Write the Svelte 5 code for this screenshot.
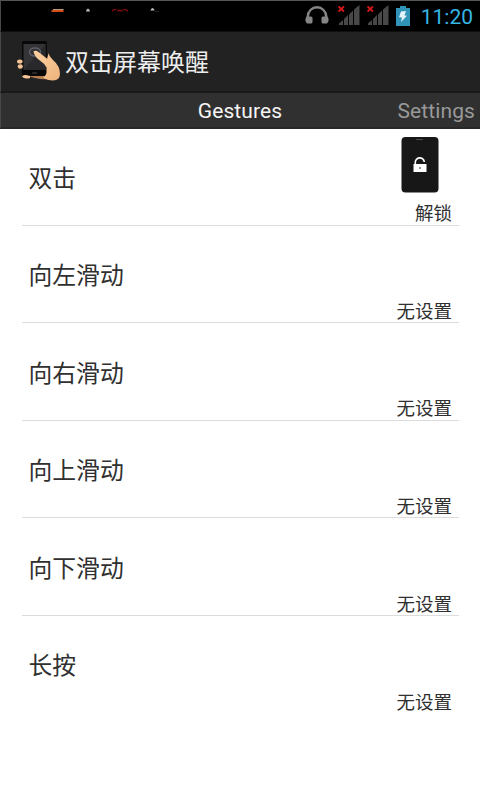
<script>
  const rows = [
    { name: '双击', action: '解锁', locked: true },
    { name: '向左滑动', action: '无设置' },
    { name: '向右滑动', action: '无设置' },
    { name: '向上滑动', action: '无设置' },
    { name: '向下滑动', action: '无设置' },
    { name: '长按', action: '无设置' }
  ];
</script>

{#snippet signal()}
  <svg class="signal" width="23" height="21" viewBox="0 0 23 21">
    <g fill="#484848">
      <path d="M1 20v-1.500l4-3.500v5z" />
      <path d="M6 20v-6l4-4v10z" />
      <path d="M11 20v-10.500l4-4v14.500z" />
      <path d="M16 20v-15.500l5.500-4.500v20z" />
    </g>
    <path d="M.5 1.500l5.500 5M6 1.500l-5.500 5" stroke="#d51919" stroke-width="1.900" />
  </svg>
{/snippet}

<div class="screen">
  <header class="status">
    <svg class="notices" width="165" height="20" viewBox="0 0 165 20">
      <path d="M53 9.500h10.500" stroke="#bd9a84" />
      <path d="M51.500 11h12" stroke="#d44d16" stroke-width="2" />
      <path d="M86 11.500q0-2 2-3q2 1 2 3zM150.500 10.500q0-2 2-2.500q2 .5 2 2.500z" fill="#bbb" />
      <path d="M112 11q1-1.500 4-1.500M117 10.500h6M123.500 9.500q3.500 0 4.500 1.500" fill="none" stroke="#810b0b" stroke-width="1.500" />
      <path d="M155 11.500h4" stroke="#222" />
    </svg>
    <div class="indicators">
      <svg class="headphones" width="24" height="19" viewBox="0 0 24 19">
        <path d="M2.800 12v-1.500a9.200 9.200 0 0 1 18.400 0v1.500" fill="none" stroke="#858585" stroke-width="2.400" />
        <path d="M1.500 10.500q-2.500 4 .5 7h4q1.500 0 1.500-1.500v-4q0-1.500-1.500-1.500zM22.500 10.500q2.500 4-.5 7h-4q-1.500 0-1.500-1.500v-4q0-1.500 1.500-1.500z" fill="#858585" />
      </svg>
      {@render signal()}
      {@render signal()}
      <svg class="battery" width="14" height="20" viewBox="0 0 14 20">
        <path d="M0 2h4V0h6v2h4v18H0z" fill="#3293b8" />
        <path d="M5 5.500l5-.5-1.500 4.500 2.500.2-6 6.300 1-4.500-3-.3z" fill="#e4f4f8" />
      </svg>
      <time>11:20</time>
    </div>
  </header>

  <div class="titlebar">
    <svg width="44" height="42" viewBox="0 0 44 42">
      <defs>
        <linearGradient id="skin" x1="0" y1="0" x2="1" y2="1">
          <stop offset="0" stop-color="#ffd2a1" />
          <stop offset="1" stop-color="#edb27c" />
        </linearGradient>
      </defs>
      <path d="M7 34l23-20l8 22q-8 4-20 1z" fill="#b57c50" />
      <rect x="5" width="25" height="35" rx="1.500" fill="#080809" />
      <path d="M6.500 3h22v26h-22z" fill="#343436" />
      <path d="M6.500 29L28.500 3v26z" fill="#29292b" />
      <ellipse cx="18" cy="11" rx="5.500" ry="4" fill="none" stroke="#5d6066" stroke-width="1.500" />
      <path d="M16.500 10.500q2-1.500 5 .5l9 7q1-3 .5-6q2 4 5 7q7 6 7 14q0 6-7 6.500q-6 0-10-3q4-2 3.500-7v-3q-2-4-6-6.500q-6-4-7-9.500z" fill="url(#skin)" />
      <ellipse cx="2.800" cy="20.500" rx="2.800" ry="2" fill="#f3c295" />
      <ellipse cx="3.300" cy="25.500" rx="2.600" ry="2.200" fill="#f3c295" />
      <path d="M5 35.500q1-2 4-1.500l4 1v2q-6 1.500-8-1.500z" fill="#f5c497" />
      <rect x="15" y="31" width="5" height="2" rx=".7" fill="#29292b" />
    </svg>
    <h1>双击屏幕唤醒</h1>
  </div>

  <nav>
    <span class="active">Gestures</span>
    <span class="next">Settings</span>
  </nav>

  <main>
    {#each rows as row}
      <section>
        <div class="name">{row.name}</div>
        <div class="detail">
          {#if row.locked}
            <svg class="phone" width="38" height="56" viewBox="0 0 38 56">
              <rect x=".5" width="37" height="55.500" rx="4" fill="#171717" />
              <path d="M15 2.500h7" stroke="#4b4b4b" />
              <rect x="12.500" y="27" width="13" height="8" fill="#fff" />
              <path d="M14.300 27v-1.200a4.500 4.500 0 0 1 9-.8" fill="none" stroke="#fff" stroke-width="1.600" />
              <circle cx="19" cy="31" r=".8" fill="#171717" />
            </svg>
          {/if}
          <div class="action">{row.action}</div>
        </div>
      </section>
    {/each}
  </main>
</div>

<style>
  .screen {
    box-sizing: border-box;
    width: 480px;
    height: 800px;
    overflow: hidden;
    display: flex;
    flex-direction: column;
    background: #fff;
    font-family: Roboto, "Noto Sans CJK SC", sans-serif;
    color: #303030;
  }
  .screen svg { display: block; flex: none; }
  .status, .titlebar, nav { box-sizing: border-box; border-left: 1px solid #484848; flex: none; }
  .status {
    height: 31px;
    border-top: 1px solid #555;
    background: #000;
    display: flex;
    justify-content: space-between;
  }
  .notices { margin: -1px 0 0 -1px; }
  .indicators { display: flex; padding-right: 7px; }
  .headphones { margin: 5px 9px 0 0; }
  .signal { margin: 4px 6px 0 0; }
  .battery { margin: 5px 9px 0 0; }
  time { width: 54px; font-size: 21px; line-height: 32px; color: #36b6e5; white-space: nowrap; text-align: right; }
  .titlebar {
    height: 62px;
    background: #222;
    border-top: 1px solid #101010;
    border-bottom: 2px solid #191919;
    display: flex;
    align-items: flex-start;
    padding: 9px 0 0 16px;
  }
  h1 { margin: 5px 0 0 4px; font-size: 24px; font-weight: 400; line-height: 34px; color: #ededed; }
  nav {
    height: 36px;
    background: #303030;
    border-bottom: 2px solid #282828;
    display: grid;
    grid-template-columns: 1fr auto 1fr;
    align-items: center;
    font-size: 21px;
    line-height: 34px;
    padding: 1px 5px 0 0;
  }
  .active { grid-column: 2; color: #f5f5f5; margin-left: 4px; letter-spacing: .1px; }
  .next { justify-self: end; color: #999; letter-spacing: .1px; }
  main { margin-top: -.8px; padding: 0 21px 0 22px; }
  section {
    box-sizing: border-box;
    height: 97.550px;
    border-bottom: 1px solid #dcdcdc;
    display: flex;
    justify-content: space-between;
    padding: 0 7px;
  }
  section:last-child { border-bottom: 0; }
  .name { margin: 32.500px 0 0 -.5px; font-size: 23.800px; line-height: 36px; }
  .detail { display: flex; flex-direction: column; align-items: flex-end; justify-content: flex-end; }
  .phone { margin: 0 13px 10px 0; }
  .action { font-size: 18.500px; line-height: 22px; margin-bottom: -.6px; }
</style>
